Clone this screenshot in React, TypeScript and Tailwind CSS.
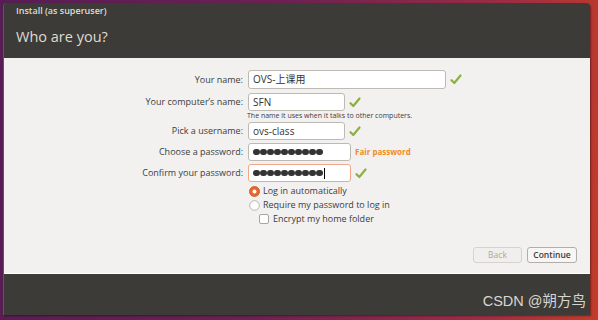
import React from "react";

const font = { fontFamily: '"Open Sans", "Noto Sans CJK SC", sans-serif' };

function Check() {
  return (
    <svg width="12" height="11" viewBox="0 0 12 11" className="shrink-0">
      <path
        d="M1.5 6.2 L4.3 9 L10.5 1.5"
        fill="none"
        stroke="#8bb13f"
        strokeWidth="2.2"
        strokeLinecap="round"
        strokeLinejoin="round"
      />
    </svg>
  );
}

function Field({
  label,
  value,
  width,
  height = 18,
  password = false,
  focus = false,
  after,
}: {
  label: string;
  value: string;
  width: string;
  height?: number;
  password?: boolean;
  focus?: boolean;
  after?: React.ReactNode;
}) {
  return (
    <div className="flex items-center">
      <div className="w-[244px] pr-[5px] text-right text-[9px] text-[#3c3c3c]">{label}</div>
      <div
        className={`${width} flex items-center rounded-[3px] border bg-white pl-[4px] ${
          focus ? "border-[#f0a688]" : "border-[#bdb9b3]"
        } ${height === 19 ? "h-[19px]" : "h-[18px]"}`}
      >
        {password ? (
          <span className="flex items-center gap-[0.5px]">
            {Array.from({ length: 10 }).map((_, i) => (
              <span key={i} className="inline-block h-[6.5px] w-[6.5px] rounded-full bg-[#333333]" />
            ))}
            {focus && <span className="ml-[1px] inline-block h-[11px] w-[1px] bg-black" />}
          </span>
        ) : (
          <span className="text-[10px] text-[#333333]">{value}</span>
        )}
      </div>
      <div className="ml-[4px] flex items-center">{after}</div>
    </div>
  );
}

function Radio({ checked }: { checked?: boolean }) {
  return checked ? (
    <svg width="11" height="11" viewBox="0 0 11 11" className="shrink-0">
      <circle cx="5.5" cy="5.5" r="5" fill="#e9672f" stroke="#c9501c" strokeWidth="0.8" />
      <circle cx="5.5" cy="5.5" r="2" fill="#ffffff" />
    </svg>
  ) : (
    <svg width="11" height="11" viewBox="0 0 11 11" className="shrink-0">
      <circle cx="5.5" cy="5.5" r="4.8" fill="#ffffff" stroke="#a8a49e" strokeWidth="0.8" />
    </svg>
  );
}

export default function App() {
  return (
    <div
      className="h-[320px] w-[598px] overflow-hidden bg-[linear-gradient(95deg,#571d55_0%,#6c2152_45%,#9a2c45_80%,#c23c2a_100%)] pl-[3px] pt-[3px]"
      style={font}
    >
      <div className="flex h-[312px] w-[587px] flex-col overflow-hidden rounded-t-[4px] border-l border-[#5b5a56] bg-[#3c3b37] shadow-[1px_1px_2px_rgba(0,0,0,0.4)]">
        {/* header */}
        <div className="h-[55px] shrink-0 px-[12px]">
          <div className="pt-[1px] text-[9px] font-semibold text-[#dfdbd2]">Install (as superuser)</div>
          <div className="mt-[8px] text-[14.5px] text-[#dfdbd2]">Who are you?</div>
        </div>

        {/* content */}
        <div className="flex h-[216px] shrink-0 flex-col border-b border-[#ffffff] bg-[#f2f1f0] pt-[12px]">
          <Field label="Your name:" value="OVS-上课用" width="w-[198px]" height={19} after={<Check />} />
          <div className="mt-[4px]">
            <Field label="Your computer’s name:" value="SFN" width="w-[97px]" after={<Check />} />
          </div>
          <div className="h-[10px] pl-[243px] text-[7px] leading-[10px] text-[#3c3c3c]">
            The name it uses when it talks to other computers.
          </div>
          <div className="mt-[1px]">
            <Field label="Pick a username:" value="ovs-class" width="w-[97px]" after={<Check />} />
          </div>
          <div className="mt-[3px]">
            <Field
              label="Choose a password:"
              value=""
              password
              width="w-[103px]"
              after={<span className="text-[8px] font-bold text-[#f28b1d]">Fair password</span>}
            />
          </div>
          <div className="mt-[3px]">
            <Field label="Confirm your password:" value="" password focus width="w-[103px]" after={<Check />} />
          </div>

          <div className="mt-[2px] flex flex-col pl-[245px] text-[9px] text-[#3c3c3c]">
            <div className="flex h-[14px] items-center gap-[3px]">
              <Radio checked />
              <span>Log in automatically</span>
            </div>
            <div className="flex h-[14px] items-center gap-[3px]">
              <Radio />
              <span>Require my password to log in</span>
            </div>
            <div className="flex h-[14px] items-center gap-[4px] pl-[10px]">
              <span className="inline-block h-[10px] w-[10px] rounded-[2px] border border-[#a8a49e] bg-white" />
              <span>Encrypt my home folder</span>
            </div>
          </div>

          <div className="flex-1" />
          <div className="flex justify-end gap-[5px] pb-[10px] pr-[13px]">
            <div className="flex h-[16px] w-[49px] items-center justify-center rounded-[3px] border border-[#d6d3ce] bg-[#f0efed] text-[8.5px] text-[#aaa7a2]">
              Back
            </div>
            <div className="flex h-[16px] w-[50px] items-center justify-center rounded-[3px] border border-[#b3afa8] bg-[#f7f6f5] text-[8.5px] font-semibold text-[#3c3c3c]">
              Continue
            </div>
          </div>
        </div>

        {/* footer */}
        <div className="flex flex-1 items-end justify-end pb-[2px] pr-[4px]">
          <span className="text-[14.5px] text-[#d8d6d2]" style={{ fontFamily: '"Liberation Sans", "Noto Sans CJK SC", sans-serif' }}>
            CSDN @朔方鸟
          </span>
        </div>
      </div>
    </div>
  );
}
